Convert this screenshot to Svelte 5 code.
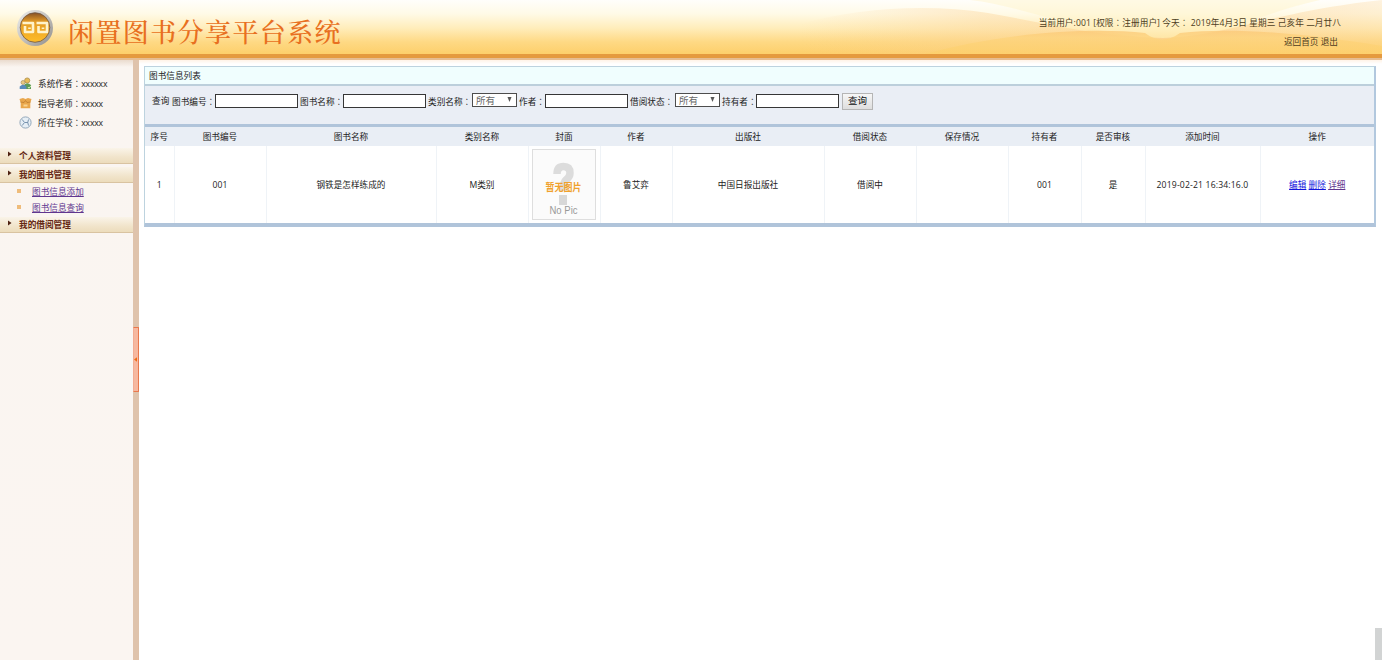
<script>
    const info = [
        { icon: 'users', label: '系统作者', value: 'xxxxxx' },
        { icon: 'box', label: '指导老师', value: 'xxxxx' },
        { icon: 'school', label: '所在学校', value: 'xxxxx' }
    ];

    const menus = [
        { name: '个人资料管理', items: [] },
        { name: '我的图书管理', items: ['图书信息添加', '图书信息查询'] },
        { name: '我的借阅管理', items: [] }
    ];

    const filters = [
        { label: '图书编号', type: 'text', width: 128 },
        { label: '图书名称', type: 'text', width: 128 },
        { label: '类别名称', type: 'select', width: 91 },
        { label: '作者', type: 'text', width: 111 },
        { label: '借阅状态', type: 'select', width: 92 },
        { label: '持有者', type: 'text', width: 119 }
    ];

    const columns = ['序号', '图书编号', '图书名称', '类别名称', '封面', '作者', '出版社', '借阅状态', '保存情况', '持有者', '是否审核', '添加时间', '操作'];

    const books = [
        ['1', '001', '钢铁是怎样练成的', 'M类别', '', '鲁艾弈', '中国日报出版社', '借阅中', '', '001', '是', '2019-02-21 16:34:16.0', '']
    ];
</script>

<div class="page">
    <header>
        <svg class="waves" width="582" height="54" viewBox="0 0 582 54">
            <defs>
                <linearGradient id="hill" x1="0" y1="0" x2="1" y2="0">
                    <stop offset="0" stop-color="#fbcf8e" stop-opacity="0" />
                    <stop offset=".5" stop-color="#fbcf8e" stop-opacity=".35" />
                    <stop offset="1" stop-color="#fbc98a" stop-opacity=".5" />
                </linearGradient>
                <linearGradient id="hill-right" x1="0" y1="0" x2="1" y2="0">
                    <stop offset="0" stop-color="#fbc98a" stop-opacity=".5" />
                    <stop offset="1" stop-color="#fbcf8e" stop-opacity=".25" />
                </linearGradient>
                <linearGradient id="front" x1="0" y1="0" x2="0" y2="1">
                    <stop offset="0" stop-color="#fbc877" />
                    <stop offset=".3" stop-color="#fdd37c" />
                    <stop offset="1" stop-color="#fdd06b" />
                </linearGradient>
            </defs>
            <path d="M0 24 C60 7 130 4 188 13 C250 24 300 37 363 38 V54 H0Z" fill="url(#hill)" />
            <path d="M363 38 C430 36 470 12 582 0 V54 H363Z" fill="url(#hill-right)" />
            <path d="M170 0 C225 6 290 37 363 38 C430 36 450 16 520 0 Z" fill="#fff3c4" opacity=".4" />
            <path d="M125 54 C200 33 290 27 345 33 Q362 46 380 33 C440 26 520 36 582 46 V54Z" fill="url(#front)" opacity=".75" />
        </svg>
        <div class="brand">
            <svg class="logo" width="38" height="38" viewBox="0 0 38 38">
                <defs>
                    <linearGradient id="ring" x1="0" y1="0" x2="1" y2="1">
                        <stop offset="0" stop-color="#f0f0ed" />
                        <stop offset=".5" stop-color="#c3c1be" />
                        <stop offset="1" stop-color="#8d8b89" />
                    </linearGradient>
                    <linearGradient id="disc" x1="0" y1="0" x2="0" y2="1">
                        <stop offset="0" stop-color="#855026" />
                        <stop offset=".3" stop-color="#e39b27" />
                        <stop offset="1" stop-color="#ffbd28" />
                    </linearGradient>
                </defs>
                <circle cx="19" cy="19" r="18" fill="url(#ring)" />
                <circle cx="19" cy="18.500" r="14.800" fill="url(#disc)" stroke="#6e5542" stroke-width=".8" />
                <path d="M6.500 14H17V23H9V17M13.500 18.500V20M20.500 14H31V23H22.500V17M27 18.500V20" fill="none" stroke="#fff3cc" stroke-width="2.600" stroke-linejoin="round" />
            </svg>
            <h1>闲置图书分享平台系统</h1>
        </div>
        <div class="user">
            <div class="status">当前用户:001 [权限<span class="colon">：</span>注册用户] 今天<span class="colon">：</span> 2019年4月3日 星期三 己亥年 二月廿八</div>
            <div class="exit"><span>返回首页</span> <span>退出</span></div>
        </div>
    </header>

    <div class="body">
        <aside>
            <div class="info">
                {#each info as row}
                    <div class="info-row">
                        <svg width="13" height="13" viewBox="0 0 13 13">
                            {#if row.icon === 'users'}
                                <circle cx="8.2" cy="3.5" r="2.6" fill="#e6bb58" stroke="#a88743" stroke-width=".7" />
                                <path d="M5 11V8Q8 4.5 12 8V12H6Z" fill="#5b9a55" />
                                <circle cx="4" cy="5.5" r="2" fill="#e9c982" stroke="#9a8455" stroke-width=".6" />
                                <path d="M.7 12V9.5Q4 6 7.4 9.5V12Z" fill="#568abc" />
                                <path d="M9 10L10 11.3L12 8.7" fill="none" stroke="#d7ecb4" />
                            {:else if row.icon === 'box'}
                                <path d="M.5 2L4 1L6.5 2L9 1L12.500 2L11.300 6V11.300H1.700V6Z" fill="#e9a64b" />
                                <path d="M1.500 5L5 5.500L6.500 3.500L8 5.500L11.500 5" fill="none" stroke="#bd7c30" stroke-width=".8" />
                                <path d="M4.500 7.500H8.500V9.500H4.500Z" fill="#f9d38e" />
                            {:else}
                                <circle cx="6.5" cy="6.5" r="5.6" fill="#e6eef5" stroke="#899fb4" stroke-width=".9" />
                                <path d="M3.2 3.5L5.5 6.5L3.2 9.5M6 6.5H9M9.5 3.5Q8 6.5 9.5 9.5" fill="none" stroke="#7893ae" stroke-width="1" />
                            {/if}
                        </svg>
                        <span>{row.label}<span class="colon">：</span><span class="value">{row.value}</span></span>
                    </div>
                {/each}
            </div>
            <nav>
                {#each menus as menu}
                    <div class="menu">
                        <svg width="4" height="6" viewBox="0 0 4 6"><path d="M0 0.500L3.500 3L0 5.500Z" fill="#4e2111" /></svg>
                        <span>{menu.name}</span>
                    </div>
                    {#if menu.items.length}
                        <ul>
                            {#each menu.items as item}
                                <li><a href="#top">{item}</a></li>
                            {/each}
                        </ul>
                    {/if}
                {/each}
            </nav>
        </aside>
        <div class="divider">
            <div class="handle">
                <svg width="3" height="5" viewBox="0 0 4 6"><path d="M4 0L0 3L4 6Z" fill="#ee6c17" /></svg>
            </div>
        </div>

        <main>
            <section class="panel">
                <div class="title">图书信息列表</div>
                <div class="search">
                    <span class="lead">查询</span>
                    {#each filters as f}
                        <div class="filter" style="width: {f.width}px">
                            <span class="label">{f.label}<span class="colon">：</span></span>
                            {#if f.type === 'text'}
                                <input type="text" />
                            {:else}
                                <div class="select"><span>所有</span><svg width="5" height="5" viewBox="0 0 5 5"><path d="M0.500 0H4.500L2.500 5Z" fill="#555" /></svg></div>
                            {/if}
                        </div>
                    {/each}
                    <button>查询</button>
                </div>
                <div class="row head">
                    {#each columns as column}
                        <div class="cell">{column}</div>
                    {/each}
                </div>
                {#each books as book}
                    <div class="row">
                        {#each book as value, i}
                            <div class="cell">
                                {#if i === 4}
                                    <svg class="cover" width="64" height="71" viewBox="0 0 64 71">
                                        <rect x=".5" y=".5" width="63" height="70" fill="#fbfbfb" stroke="#dedede" />
                                        <path d="M25 25Q25 17.500 31.500 17.500Q38 17.500 38 24Q38 28 34 31Q31 33.500 31 42" fill="none" stroke="#dcdcdc" stroke-width="7.500" />
                                        <rect x="27" y="46" width="8" height="10" fill="#d8d8d8" />
                                        <text class="nopic-cn" x="13.500" y="42" textLength="36" lengthAdjust="spacingAndGlyphs">暂无图片</text>
                                        <text class="nopic-en" x="17.500" y="65" textLength="28" lengthAdjust="spacingAndGlyphs">No Pic</text>
                                    </svg>
                                {:else if i === 12}
                                    <div class="actions">
                                        <a class="new" href="#top">编辑</a>
                                        <a class="new" href="#top">删除</a>
                                        <a href="#top">详细</a>
                                    </div>
                                {:else}
                                    <span class:time={i === 11}>{value}</span>
                                {/if}
                            </div>
                        {/each}
                    </div>
                {/each}
            </section>
        </main>
        <div class="corner"></div>
    </div>
</div>

<style>
    :global(body) {
        margin: 0;
        overflow: hidden;
    }
    .page {
        width: 1382px;
        height: 660px;
        display: flex;
        flex-direction: column;
        background: #fff;
        color: #222;
        font-family: "Open Sans", "Noto Sans CJK SC", sans-serif;
        font-size: 8.65px;
        line-height: 12px;
        white-space: nowrap;
    }
    .colon {
        font-family: "Noto Sans CJK TC", sans-serif;
    }

    /* Top banner */
    header {
        position: relative;
        box-sizing: border-box;
        height: 60px;
        flex: none;
        display: flex;
        justify-content: space-between;
        background: linear-gradient(#fffefb 0, #fffae6 14px, #ffedbb 28px, #fed984 42px, #fdcf6b 54px);
        border-bottom: 2px solid #e6bd91;
        box-shadow: inset 0 -4px #e59a3e;
    }
    .waves {
        position: absolute;
        right: 0;
        top: 0;
    }
    .brand {
        display: flex;
        padding: 9px 0 0 16px;
    }
    h1 {
        margin: 6px 0 0 14px;
        font-family: "Liberation Serif", "Noto Serif CJK SC", "Noto Sans CJK SC", serif;
        font-size: 26px;
        font-weight: 500;
        line-height: 38px;
        letter-spacing: 1.4px;
        color: #e86f20;
    }
    .user {
        position: relative;
        display: flex;
        flex-direction: column;
        align-items: flex-end;
        padding: 16px 41px 0 0;
        color: #4d3d22;
    }
    .status {
        letter-spacing: 0.08px;
    }
    .exit {
        margin: 7px 3px 0 0;
    }

    /* Left side */
    .body {
        position: relative;
        flex: 1;
        display: flex;
    }
    aside {
        width: 133px;
        flex: none;
        background: linear-gradient(#eadbce 0, #faf5f1 7px, #fbf5f1 100%);
    }
    .info {
        padding: 14px 0 0 19px;
        height: 74px;
    }
    .info-row {
        display: flex;
        align-items: center;
        gap: 6px;
        height: 19.4px;
    }
    .value {
        letter-spacing: -0.15px;
    }
    .menu {
        box-sizing: border-box;
        display: flex;
        align-items: center;
        gap: 7px;
        height: 16px;
        margin-bottom: 3px;
        padding: 1px 0 0 8px;
        border-bottom: 1px solid #d9c3a1;
        background: linear-gradient(#faf4e9, #f1e4cb 60%, #ecdcbc);
        color: #652714;
        font-weight: bold;
    }
    .menu svg {
        margin-top: -4px;
    }
    ul {
        margin: -2px 0 1px;
        padding: 0;
        list-style: none;
    }
    li {
        display: flex;
        align-items: center;
        gap: 11px;
        height: 16px;
        padding-left: 17px;
    }
    li::before {
        content: '';
        width: 4px;
        height: 4px;
        margin-top: -2px;
        background: #efbc7b;
    }
    a {
        color: #60368f;
    }
    a.new {
        color: #1414dc;
    }
    .divider {
        width: 6px;
        flex: none;
        display: flex;
        align-items: center;
        background: #dfc3ac;
    }
    .handle {
        box-sizing: border-box;
        width: 6px;
        height: 65px;
        margin-bottom: 1px;
        display: flex;
        align-items: center;
        border: 1px solid #e9784c;
        border-left-color: #f3ac93;
        border-radius: 1px;
        background: #f6b8a0;
    }

    /* Book list */
    main {
        flex: 1;
        padding: 6px 6px 0 5px;
        background: linear-gradient(#fff3e7 0, #fff 4px);
    }
    .panel {
        box-sizing: border-box;
        width: 1232px;
        border: 1px solid #bdd3df;
        border-right: 2px solid #b2c8de;
        border-bottom: 4px solid #b0c4da;
    }
    .title {
        height: 17px;
        padding-left: 4px;
        border-bottom: 2px solid #bccfdb;
        background: #f0fefe;
        line-height: 18px;
    }
    .search {
        box-sizing: border-box;
        display: flex;
        align-items: center;
        height: 38px;
        padding: 0 0 8px 7px;
        background: #eaeef5;
    }
    .lead {
        width: 20px;
    }
    .filter {
        display: flex;
        justify-content: space-between;
        align-items: center;
    }
    .filter .label {
        flex: 1;
        min-width: 0;
    }
    input {
        box-sizing: border-box;
        width: 83px;
        height: 14px;
        margin: 0 2px 0 0;
        padding: 0;
        border: 1px solid #363636;
        background: #fff;
    }
    .select {
        box-sizing: border-box;
        display: flex;
        justify-content: space-between;
        width: 45px;
        height: 14px;
        margin: -2px 2px 0 0;
        padding: 0 4px 0 3px;
        border: 1px solid #4d4d4d;
        background: #fff;
        color: #666;
        font-size: 9.5px;
        line-height: 13px;
    }
    .select svg {
        margin-top: 3px;
    }
    button {
        box-sizing: border-box;
        width: 31px;
        height: 17px;
        margin-left: 1px;
        padding: 0;
        border: 1px solid #b5b5b5;
        background: linear-gradient(#f6f6f6, #dedede);
        color: #111;
        font-family: inherit;
        font-size: 9.5px;
        line-height: 14px;
    }
    .row {
        display: grid;
        grid-template-columns: 29.5px 92px 170px 92px 72px 72px 152px 92px 92px 73px 64px 115px 1fr;
        height: 77px;
    }
    .cell {
        display: flex;
        align-items: center;
        justify-content: center;
        border-right: 1px solid #eff3f7;
    }
    .cell:last-child {
        border-right: 0;
    }
    .head {
        height: 19px;
        border-top: 3px solid #b0c4da;
        background: #e9eef5;
    }
    .head .cell {
        border-color: transparent;
    }
    .time {
        letter-spacing: 0.16px;
    }
    .nopic-cn {
        fill: #f0a12c;
        font-size: 10px;
        font-weight: bold;
    }
    .nopic-en {
        fill: #999;
        font-family: "Liberation Sans", sans-serif;
        font-size: 10px;
    }
    .corner {
        position: absolute;
        right: 0;
        bottom: 0;
        width: 7px;
        height: 32px;
        background: #d2d4d4;
    }
</style>
